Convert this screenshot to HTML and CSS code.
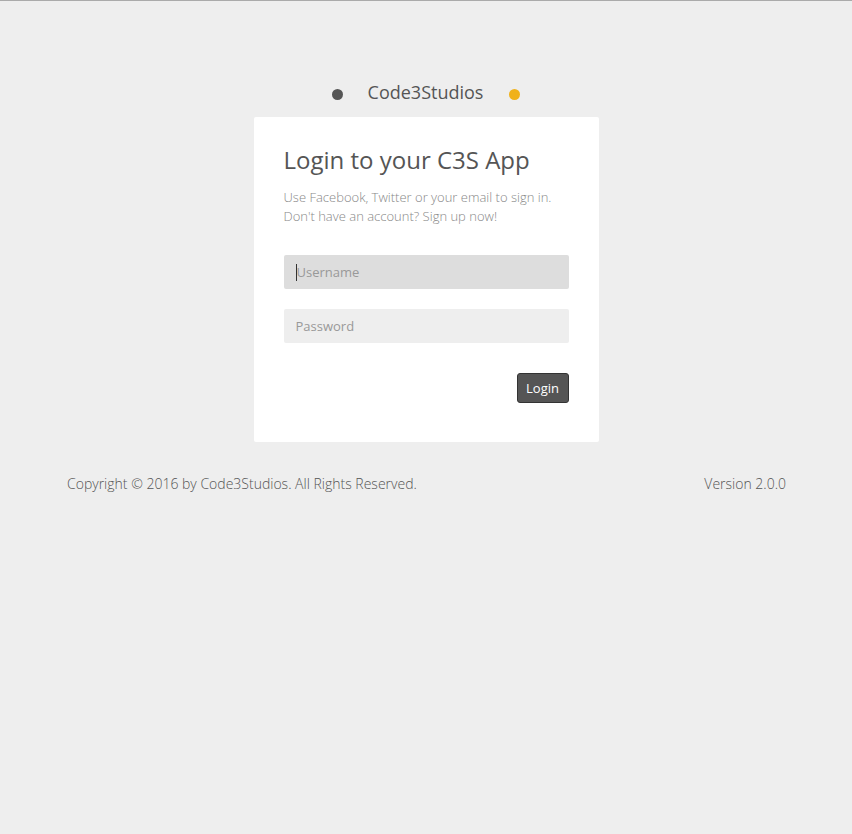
FILE: index.html
```html
<!DOCTYPE html>
<html>
<head>
<meta charset="utf-8">
<link rel="stylesheet" href="styles.css">
</head>
<body>
<div class="page">
  <div class="brand">
    <span class="dot dot-dark"></span>
    <span class="brand-name">Code3Studios</span>
    <span class="dot dot-yellow"></span>
  </div>
  <div class="card">
    <h1 class="title">Login to your C3S App</h1>
    <p class="subtitle">Use Facebook, Twitter or your email to sign in.<br>Don't have an account? Sign up now!</p>
    <div class="field field-active"><span class="caret"></span><span class="ph">Username</span></div>
    <div class="field"><span class="ph">Password</span></div>
    <div class="actions"><button class="btn">Login</button></div>
  </div>
  <div class="footer">
    <span>Copyright © 2016 by Code3Studios. All Rights Reserved.</span>
    <span>Version 2.0.0</span>
  </div>
</div>
</body>
</html>
```
FILE: styles.css
```css
html, body { margin: 0; padding: 0; }
body {
  background: #eeeeee;
  font-family: "Open Sans", "Noto Sans", sans-serif;
  border-top: 1px solid #aaaaaa;
  min-height: 833px;
}
.page { display: flex; flex-direction: column; align-items: center; }
.brand {
  display: flex; align-items: center;
  margin-top: 78px; height: 26px;
  color: #555;
}
.dot { width: 11px; height: 11px; border-radius: 50%; display: inline-block; margin-top: 5px; }
.dot-dark { background: #555; }
.dot-yellow { background: #f0b11a; }
.brand-name { font-size: 18px; margin: 0 26px 0 25px; }
.card {
  margin-top: 12px;
  width: 285px;
  padding: 26px 30px 39px;
  background: #fff;
  border-radius: 2px;
}
.title {
  margin: 0; font-weight: 400; font-size: 24px; line-height: 34px; color: #555;
}
.subtitle {
  margin: 11px 0 0; font-weight: 300; font-size: 13px; line-height: 19px; color: #888;
}
.field {
  margin-top: 20px; height: 34px; background: #eee; border-radius: 2px;
  display: flex; align-items: center; padding-left: 12px; box-sizing: border-box;
  font-size: 13px; color: #999;
}
.field-active { background: #ddd; margin-top: 29px; }
.caret { width: 1px; height: 17px; background: #333; }
.actions { display: flex; justify-content: flex-end; margin-top: 30px; }
.btn {
  width: 52px; height: 30px; background: #555; color: #fff;
  border: 1px solid #333; border-radius: 3px;
  font-family: "Open Sans", sans-serif; font-size: 13px; padding: 0;
}
.footer {
  width: 720px; margin-top: 32px; padding-left: 1px; box-sizing: border-box;
  display: flex; justify-content: space-between;
  font-size: 14px; font-weight: 300; color: #555;
}
```
